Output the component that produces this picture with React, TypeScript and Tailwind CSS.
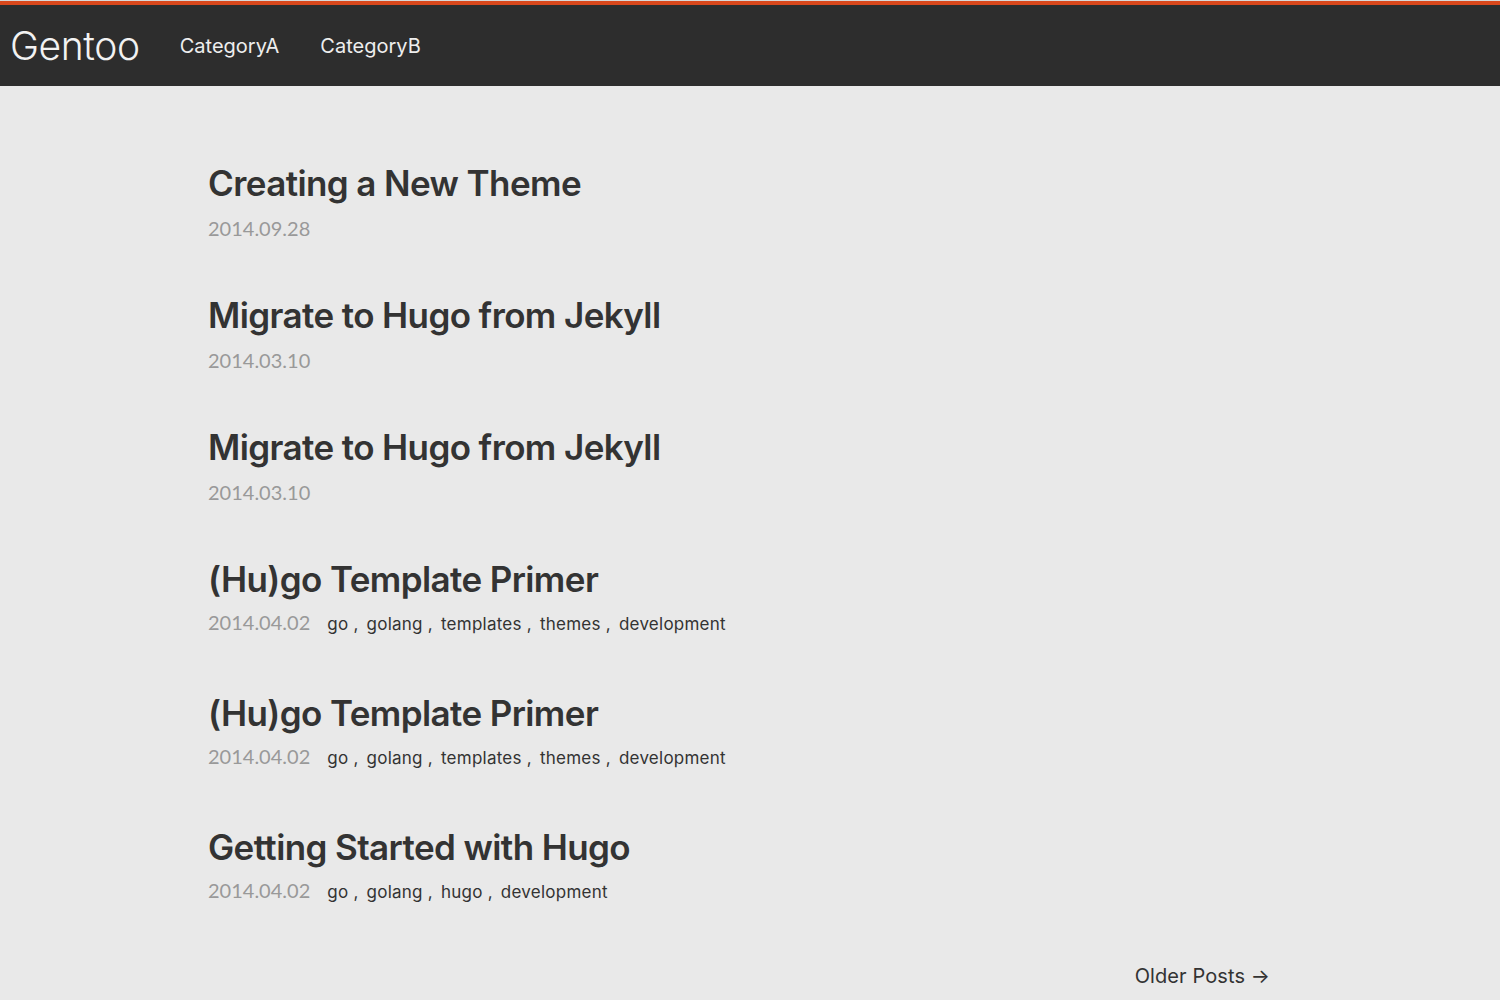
const posts = [
  { title: "Creating a New Theme", date: "2014.09.28", tags: [] as string[] },
  { title: "Migrate to Hugo from Jekyll", date: "2014.03.10", tags: [] },
  { title: "Migrate to Hugo from Jekyll", date: "2014.03.10", tags: [] },
  { title: "(Hu)go Template Primer", date: "2014.04.02", tags: ["go", "golang", "templates", "themes", "development"] },
  { title: "(Hu)go Template Primer", date: "2014.04.02", tags: ["go", "golang", "templates", "themes", "development"] },
  { title: "Getting Started with Hugo", date: "2014.04.02", tags: ["go", "golang", "hugo", "development"] },
];

export default function App() {
  return (
    <div className="h-[1000px] overflow-hidden bg-[#e9e9e9] font-['Inter',sans-serif] text-[#333]">
      <header className="border-t border-[#d8d8d8] bg-[#2d2d2d]">
        <div className="h-[4px] bg-[#d9481c]" />
        <nav className="flex h-[81px] items-center pl-[10px] pt-[1px]">
          <a className="text-[39px] font-light tracking-[-0.4px] text-[#f2f2f2]">Gentoo</a>
          <a className="ml-[40px] text-[20px] text-[#eee]">CategoryA</a>
          <a className="ml-[41px] text-[20px] text-[#eee]">CategoryB</a>
        </nav>
      </header>
      <main className="ml-[208px] w-[1062px] pt-[75px]">
        {posts.map((p, i) => (
          <article key={i} className="mb-[44px]">
            <h2 className="text-[35px] font-semibold leading-[44px] tracking-[-0.6px] text-[#333]">{p.title}</h2>
            <div className={p.tags.length > 0 ? "mt-[6px] flex h-[40px] items-baseline" : "mt-[8px] flex h-[36px] items-baseline"}>
              <span className="font-['Lato',sans-serif] text-[20px] text-[#999]">{p.date}</span>
              {p.tags.length > 0 && (
                <span className="ml-[17px] text-[17px] tracking-[0.25px] text-[#333]">
                  {p.tags.map((t, j) => (
                    <span key={j}>
                      {t}
                      {j < p.tags.length - 1 && <span className="ml-[5px] mr-[8px]">,</span>}
                    </span>
                  ))}
                </span>
              )}
            </div>
          </article>
        ))}
        <div className="flex justify-end pt-[2px]">
          <a className="text-[20px] tracking-[0.1px] text-[#333]">Older Posts →</a>
        </div>
      </main>
    </div>
  );
}
